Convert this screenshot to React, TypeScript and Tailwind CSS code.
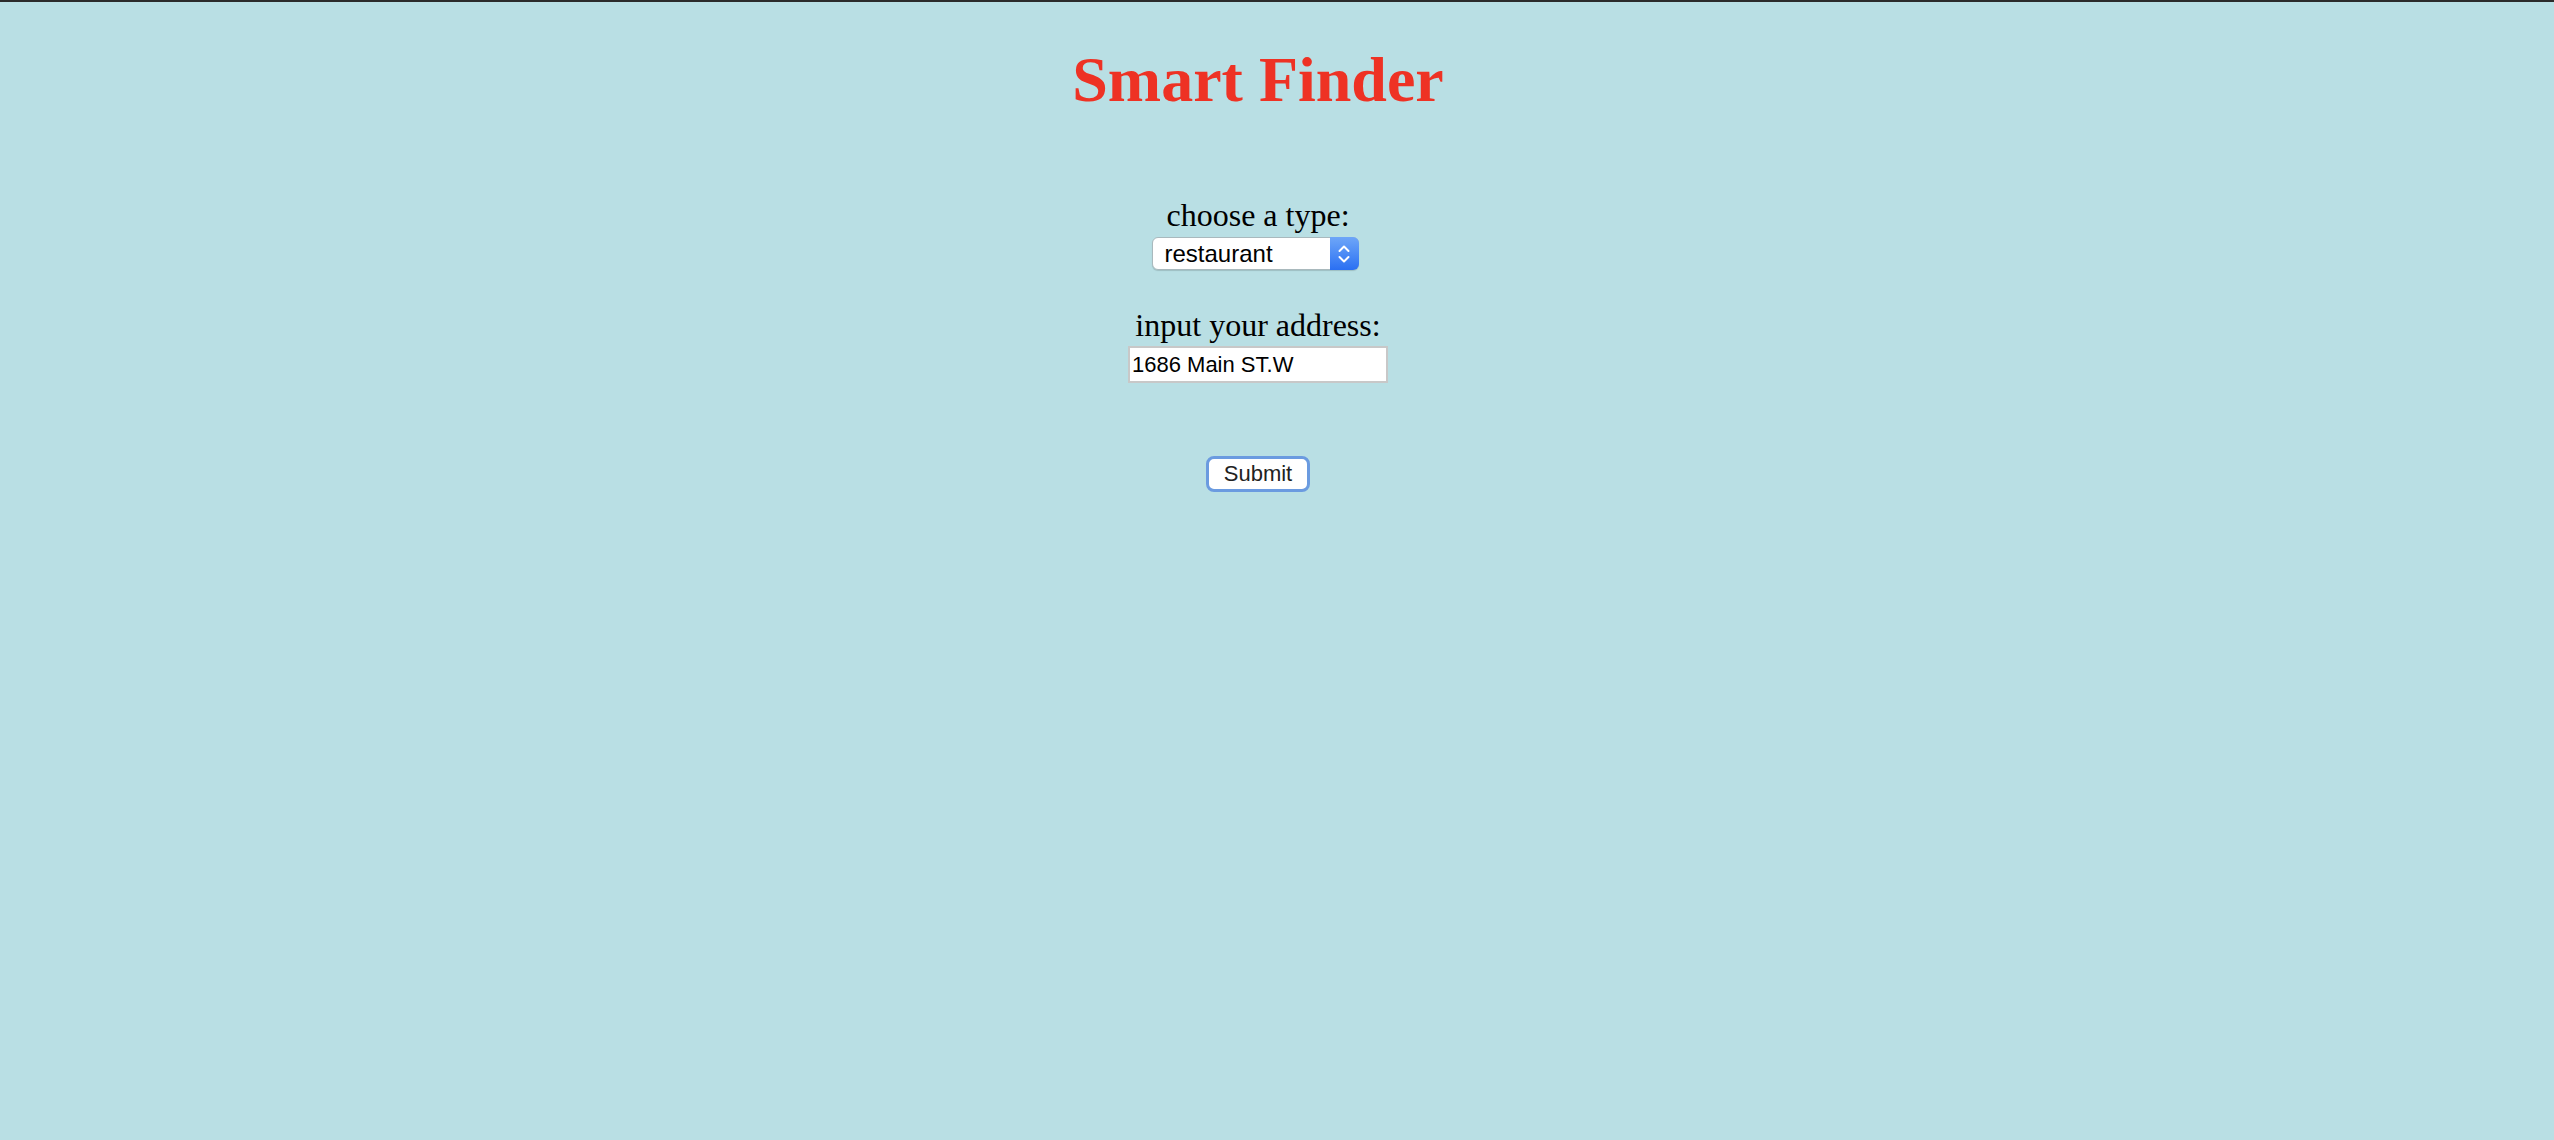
import { useState } from 'react'

export default function App() {
  const [type, setType] = useState('restaurant')
  const [address, setAddress] = useState('1686 Main ST.W')

  return (
    <div className="min-h-[1140px] w-full bg-[#b9dfe4] border-t-2 border-[#2b2b2b]">
      <form
        className="w-[2516px] flex flex-col items-center"
        onSubmit={(e) => e.preventDefault()}
      >
        <h1 className="mt-[46px] text-[64px] leading-none font-bold text-[#ee3224] font-['Liberation_Serif',serif]">
          Smart Finder
        </h1>

        <label className="mt-[87px] text-[32px] leading-none text-black font-['Liberation_Serif',serif]">
          choose a type:
        </label>
        <div className="relative mt-[6px] mr-[6px] w-[207px] h-[33px]">
          <select
            value={type}
            onChange={(e) => setType(e.target.value)}
            className="appearance-none w-full h-full bg-white rounded-[6px] border border-[#a9b9bd] shadow-[0_1px_1px_rgba(0,0,0,0.15)] pl-[12px] pr-[32px] text-[24px] leading-none text-black font-['Liberation_Sans',sans-serif] outline-none"
          >
            <option value="restaurant">restaurant</option>
            <option value="cafe">cafe</option>
            <option value="bar">bar</option>
            <option value="hotel">hotel</option>
          </select>
          <div className="pointer-events-none absolute right-0 top-0 w-[29px] h-[33px] rounded-r-[6px] bg-gradient-to-b from-[#6ea6f8] to-[#2a6ff2] flex items-center justify-center">
            <svg width="14" height="22" viewBox="0 0 14 22" fill="none">
              <path d="M2.5 8 L7 3.5 L11.5 8" stroke="white" strokeWidth="2" strokeLinecap="round" strokeLinejoin="round" />
              <path d="M2.5 14 L7 18.5 L11.5 14" stroke="white" strokeWidth="2" strokeLinecap="round" strokeLinejoin="round" />
            </svg>
          </div>
        </div>

        <label className="mt-[39px] text-[32px] leading-none text-black font-['Liberation_Serif',serif]">
          input your address:
        </label>
        <input
          value={address}
          onChange={(e) => setAddress(e.target.value)}
          className="mt-[5px] w-[260px] h-[37px] bg-white border-2 border-[#c8c8c8] px-[2px] text-[22px] text-black font-['Liberation_Sans',sans-serif] outline-none"
        />

        <button
          type="submit"
          className="mt-[73px] w-[104px] h-[36px] bg-white rounded-[8px] border-[3px] border-[#6b9be0] text-[22px] leading-none text-[#222] font-['Liberation_Sans',sans-serif]"
        >
          Submit
        </button>
      </form>
    </div>
  )
}
